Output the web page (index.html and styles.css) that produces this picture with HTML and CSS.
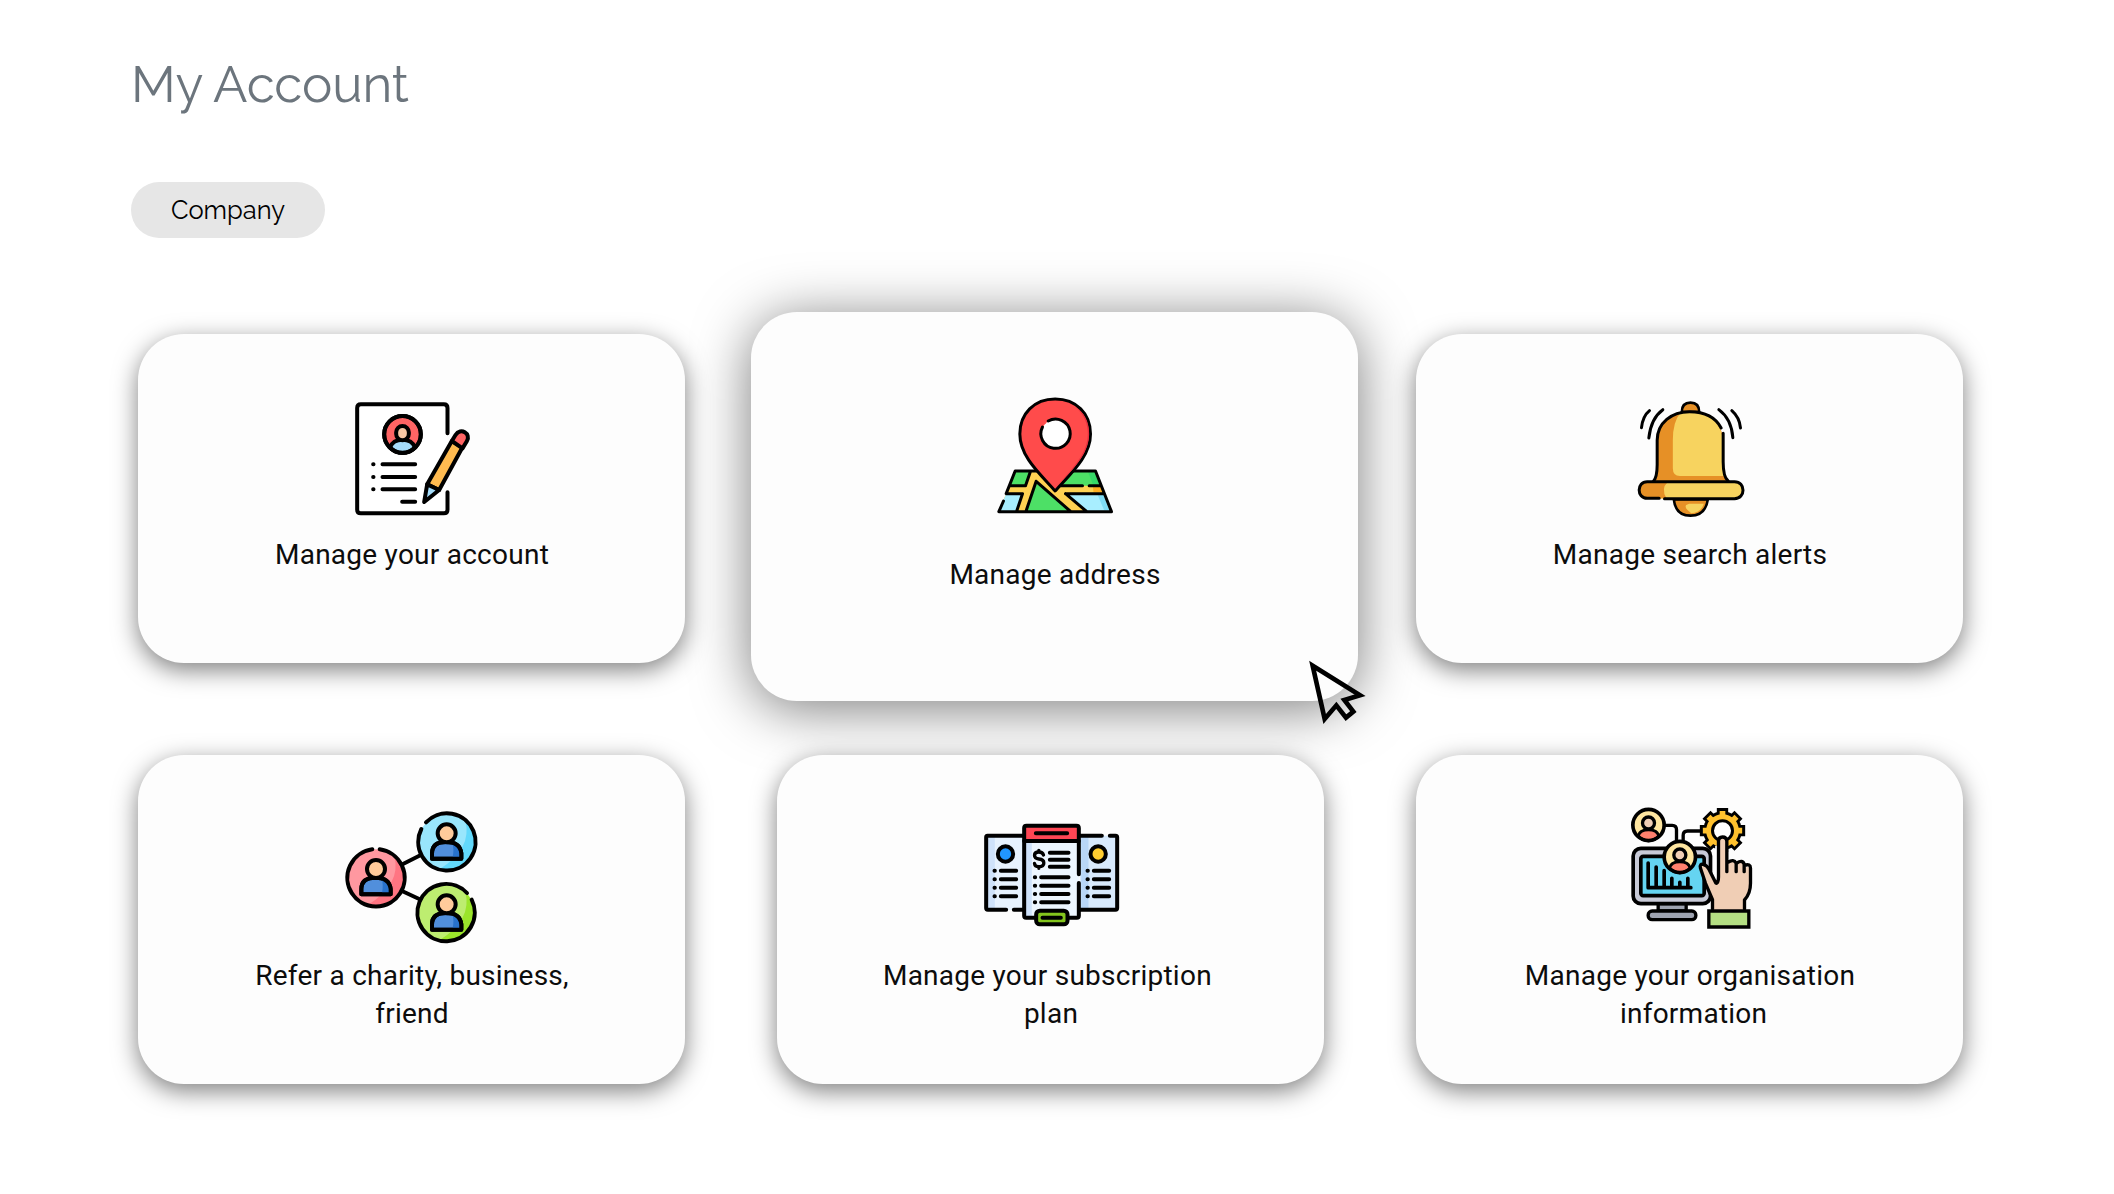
FILE: index.html
```html
<!DOCTYPE html>
<html lang="en">
<head>
<meta charset="utf-8">
<title>My Account</title>
<link rel="stylesheet" href="styles.css">
</head>
<body>
<main class="page">
  <h1 class="page-title">My Account</h1>
  <button class="pill" type="button">Company</button>

  <section class="grid">
    <article class="card">
      <div class="art">
        <svg class="icon" width="140" height="140" viewBox="4.500 0 420 420">
          <path d="M321 130V54q0-11-11-11H61q-11 0-11 11v305q0 11 11 11h249q11 0 11-11V307" fill="#fff" stroke-width="12"/>
          <circle cx="186" cy="133" r="55" fill="#ff6464"/>
          <path d="M149 172q8-23 37-23t37 23q-15 17-37 17t-37-17z" fill="#a5dcfa"/>
          <rect x="167" y="108" width="38" height="43" rx="19" fill="#fac8a5"/>
          <circle cx="186" cy="133" r="55"/>
          <path d="M126 223h98M126 261h98M126 298h98M185 335h39M98 223h1M98 261h1M98 298h1" stroke-width="12"/>
          <path d="M260 283l74-130 32 19-70 128z" fill="#ffbb50"/>
          <path d="M334 153l11-18c15-24 48-4 34 19l-13 21z" fill="#ff6464"/>
          <path d="M260 283l36 17-45 36z" fill="#a5dcfa"/>
        </svg>
      </div>
      <h2 class="label">Manage your account</h2>
    </article>

    <article class="card card-active">
      <div class="art">
        <svg class="icon thin" width="140" height="140" viewBox="-1.500 0 420 420">
          <path d="M89 258H330L378 380H40z" fill="#ffd252" stroke="none"/>
          <path d="M89 258h45l-14 44H73zM224 302l28-44h78l17 44zM152 289L121 380H256z" fill="#4de066" stroke="none"/>
          <path d="M62 326H111L93 380H40zM240 326H357L378 380H304z" fill="#a8eeff" stroke="none"/>
          <path d="M308 262h19l14 36h-19z" fill="#20cf69" stroke="none" opacity=".5"/>
          <path d="M337 331h17l17 45h-15z" fill="#7fdcf5" stroke="none"/>
          <path d="M322 303h22l7 19h-27z" fill="#ffae20" stroke="none"/>
          <path d="M54 348L40 380H378L330 258H89L62 326M73 302h47M62 326h49M224 302h67M311 302h33M240 326h116M134 262l-14 40M111 326L93 380M240 326l64 54M152 289L121 380M152 289L256 380"/>
          <path d="M209 42C146 42 103 86 103 147c0 68 61 120 106 171 45-51 106-103 106-171C315 86 272 42 209 42z" fill="#ff4b4b"/>
          <path d="M270 66c45 39 46 98 19 144-18 31-46 61-75 94 43-45 97-95 97-157 0-40-16-65-41-81z" fill="#e7313f" stroke="none"/>
          <circle cx="209" cy="148" r="43" fill="#fff" stroke="none"/>
          <path d="M188 108a44 44 0 1 1-17 18"/>
        </svg>
      </div>
      <h2 class="label">Manage address</h2>
      <svg class="cursor" width="60" height="70" viewBox="84 114 180 210">
        <path d="M98 137L134 297 169 256 198 293 220 275 193 240 240 226z"/>
      </svg>
    </article>

    <article class="card">
      <div class="art">
        <svg class="icon" width="140" height="140" viewBox="-1.500 0 420 420">
          <path d="M184 66q0-28 26-28t26 28z" fill="#e69026" stroke-width="8"/>
          <path d="M160 328h102q-7 49-52 49t-50-49z" fill="#e69026" stroke-width="8"/>
          <path d="M206 341h44q-8 27-38 29-22-17-15-25z" fill="#f7d35f" stroke="none"/>
          <path d="M98 275q12-13 12-51V151C110 98 154 65 207 65c60 0 102 40 102 90v60q0 46 15 60z" fill="#e69026" stroke="none"/>
          <path d="M180 68h57c44 8 70 48 70 88v60q0 30 5 42H178q-21 0-21-23V150q0-55 23-82z" fill="#f7d35f" stroke="none"/>
          <path d="M98 275q12-13 12-51V151C110 98 154 65 207 65q70 0 95 49M308 130v85q0 46 15 58" stroke-width="9"/>
          <rect x="55" y="275" width="312" height="51" rx="25.500" fill="#f7d35f" stroke="none"/>
          <path d="M142 276H80c-34 0-34 49 0 49h58q-18-29 4-49z" fill="#e69026" stroke="none"/>
          <path d="M116 325H80C48 325 48 275 80 275H342c34 0 34 51 0 51H132" stroke-width="9"/>
          <path d="M87 62Q67 78 63 113M127 59Q91 85 85 144M334 62q23 20 26 52M295 59q38 28 42 84" stroke-width="9"/>
        </svg>
      </div>
      <h2 class="label">Manage search alerts</h2>
    </article>

    <article class="card">
      <div class="art art-refer">
        <svg class="icon" width="155" height="155" viewBox="-3 0 465 465">
          <defs>
            <g id="person">
              <path d="M-42 54V38Q-42 4 0 4T46 38V54z" fill="#518fdc"/>
              <path d="M19 9q24 5 22 41H20q5-25-1-41z" fill="#2872cc" stroke="none"/>
              <path d="M-42 54V38Q-42 4 0 4T46 38V54z"/>
              <circle cx="2" cy="-22" r="27" fill="#ffcb9b"/>
            </g>
          </defs>
          <path d="M204 192l52-26M201 273l58 27"/>
          <circle cx="122" cy="233" r="85" fill="#ff98a0" stroke="none"/>
          <path d="M178 168q22 85-80 147 60 12 95-34 32-60-15-113z" fill="#ff7582" stroke="none"/>
          <path d="M112 148a86 86 0 1 0 22 0"/>
          <use href="#person" x="121" y="229"/>
          <circle cx="335" cy="127" r="85" fill="#99e6fc" stroke="none"/>
          <path d="M391 62q22 85-80 147 60 12 95-34 32-60-15-113z" fill="#62d9fb" stroke="none"/>
          <path d="M273 67a86 86 0 1 1-14 20"/>
          <use href="#person" x="333" y="122"/>
          <circle cx="335" cy="340" r="85" fill="#bded70" stroke="none"/>
          <path d="M391 275q22 85-80 147 60 12 95-34 32-60-15-113z" fill="#9be52b" stroke="none"/>
          <path d="M396 279a86 86 0 1 0 14 20"/>
          <use href="#person" x="333" y="335"/>
        </svg>
      </div>
      <h2 class="label">Refer a charity, business,<br>friend</h2>
    </article>

    <article class="card">
      <div class="art art-plan">
        <svg class="icon" width="160" height="140" viewBox="1.500 0 480 420">
          <path d="M47 92H160V315H47z" fill="#e7f2fe" stroke="none"/>
          <path d="M49 94h24v218H49z" fill="#cfe2fa" stroke="none"/>
          <path d="M328 92H440V315H328z" fill="#d7e9fc" stroke="none"/>
          <path d="M332 94h22v218h-22z" fill="#b8d6f7" stroke="none"/>
          <path d="M160 92H51q-4 0-4 5V309q0 5 5 5h55M130 314h30M328 92h66M418 92h17q5 0 5 5V309q0 5-5 5H328"/>
          <path d="M161 108H325V338H161z" fill="#edf6ff" stroke="none"/>
          <path d="M165 112h19v222h-19z" fill="#cfe2fa" stroke="none"/>
          <path d="M161 108V69q0-7 7-7H318q7 0 7 7v39z" fill="#ff4654"/>
          <path d="M161 108V332q0 6 6 6h30M325 108V208M325 234v98q0 6-6 6H294"/>
          <circle cx="105" cy="147" r="23" fill="#2196ff"/>
          <circle cx="383" cy="147" r="23" fill="#ffcd30"/>
          <rect x="197" y="317" width="94" height="41" rx="11" fill="#83c51d"/>
          <path d="M196 85h94M238 143h56M238 164h56M238 185h56M212 217h82M212 242h82M212 267h82M212 292h82M193 217h1M193 242h1M193 267h1M193 292h1M216 338h55"/>
          <path d="M91 197h46M91 223h46M91 248h46M91 274h46M72 197h1M72 223h1M72 248h1M72 274h1M370 197h46M370 223h46M370 248h46M370 274h46M351 197h1M351 223h1M351 248h1M351 274h1"/>
          <path d="M219 150q-3-9-14-9-13 0-13 10t13 11q15 1 15 12t-15 11q-12 0-13-10M205 136v5M205 185v5" stroke-width="10"/>
        </svg>
      </div>
      <h2 class="label">Manage your subscription&nbsp;<br>plan</h2>
    </article>

    <article class="card">
      <div class="art art-org">
        <svg class="icon" width="150" height="150" viewBox="-1.500 0 450 450">
          <path d="M148 91h22q13 0 13 13v35M203 144V121q0-13 13-13h42" stroke-width="10"/>
          <path d="M128 326h84v22h-84z" fill="#9ea3b0" stroke-width="10"/>
          <rect x="98" y="348" width="143" height="26" rx="12" fill="#9ea3b0" stroke-width="10"/>
          <rect x="53" y="160" width="232" height="166" rx="23" fill="#c8cad7" stroke-width="11"/>
          <rect x="76" y="184" width="190" height="118" rx="7" fill="#65d4f1" stroke-width="11"/>
          <path d="M98 204v74h128M122 216v60M146 227v49M169 250v26M193 262v14M217 250v26" stroke-width="11"/>
          <g id="member">
            <circle cx="99" cy="90" r="47" fill="#ffe6a0" stroke="none"/>
            <path d="M68 123q4-19 31-19t31 19q-12 14-31 14t-31-14z" fill="#ff806e" stroke-width="9"/>
            <circle cx="99" cy="84" r="18" fill="#f0ceb5" stroke-width="10"/>
            <circle cx="99" cy="90" r="47" stroke-width="11"/>
          </g>
          <use href="#member" x="94" y="96"/>
          <g stroke-linecap="butt">
            <path d="M321 39V171M253 107H389M273 59L369 155M273 155L369 59" stroke-width="34"/>
            <circle cx="321" cy="107" r="58" fill="#000" stroke="none"/>
            <path d="M321 48V162M262 107H380M279 65L363 149M279 149L363 65" stroke="#ffc12e" stroke-width="17"/>
            <circle cx="321" cy="107" r="49" fill="#ffc12e" stroke="none"/>
          </g>
          <circle cx="321" cy="107" r="30" fill="#fff" stroke-width="9"/>
          <path d="M299 262V152H308V246z" fill="#fff" stroke="none"/>
          <path d="M308 246V139q0-13 13-13t13 13v78h3V200q13-10 25 4v13-13q13-12 25 3v12q16-9 18 6v45q0 31-18 50v35H291V314l-21-49-15-45c-6-21 20-12 27 4l18 42z" fill="#f0ceb5" stroke="none"/>
          <path d="M291 342V314l-21-49-15-45c-6-21 19-12 26 4l20 40c5 4 8-9 8-18V139q0-13 12-13t13 13v91M337 202q18-12 25 3v25M364 204q18-11 22 4v22M387 211q18-6 18 9v45q0 31-18 50v27" stroke-width="10"/>
          <path d="M280 348H400V396H280z" fill="#b4df83" stroke-width="10" stroke-linejoin="miter"/>
        </svg>
      </div>
      <h2 class="label">Manage your organisation<br>&nbsp;information</h2>
    </article>
  </section>
</main>
</body>
</html>
```
FILE: styles.css
```css
* { box-sizing: border-box; }

body {
  margin: 0;
  background: #fff;
}

.page {
  display: flex;
  flex-direction: column;
  align-items: flex-start;
  min-height: 1194px;
  padding: 54px 0 0 131px;
}

.page-title {
  margin: 0 0 68px;
  color: #6c757d;
  font: 400 51px/60px Raleway, Lato, sans-serif;
  letter-spacing: -.1px;
  white-space: nowrap;
}

.pill {
  width: 194px;
  height: 56px;
  padding: 0;
  border: 0;
  border-radius: 28px;
  background: #e6e6e6;
  color: #000;
  font: 400 25.5px/56px Raleway, Lato, sans-serif;
}

.grid {
  display: grid;
  grid-template-columns: repeat(3, 547px);
  grid-auto-rows: 329px;
  gap: 92px;
  margin: 96px 0 0 7px;
}

.card {
  position: relative;
  display: flex;
  flex-direction: column;
  align-items: center;
  border-radius: 46px;
  background: #fdfdfd;
  box-shadow: 0 7px 24px rgba(0, 0, 0, .5);
}

.card-active {
  margin: -22px -34px -38px -26px;
  box-shadow: 0 7px 56px rgba(0, 0, 0, .52);
}

.art {
  height: 202px;
  padding-top: 56px;
}

.art-refer { padding-top: 45px; }
.art-plan { padding-top: 50px; }
.art-org { padding-top: 40px; }

.card-active .art {
  height: 244px;
  padding-top: 73px;
}

.icon {
  display: block;
  fill: none;
  stroke: #000;
  stroke-width: 12px;
  stroke-linecap: round;
  stroke-linejoin: round;
}

.thin { stroke-width: 9px; }

.label {
  margin: 0;
  padding-left: 1px;
  color: #0c0c0c;
  font: 400 28px/38px Roboto, sans-serif;
  letter-spacing: .25px;
  text-align: center;
  white-space: nowrap;
}

.cursor {
  position: absolute;
  left: 557px;
  top: 346px;
  fill: none;
  stroke: #000;
  stroke-width: 14px;
  stroke-miterlimit: 10;
}
```
